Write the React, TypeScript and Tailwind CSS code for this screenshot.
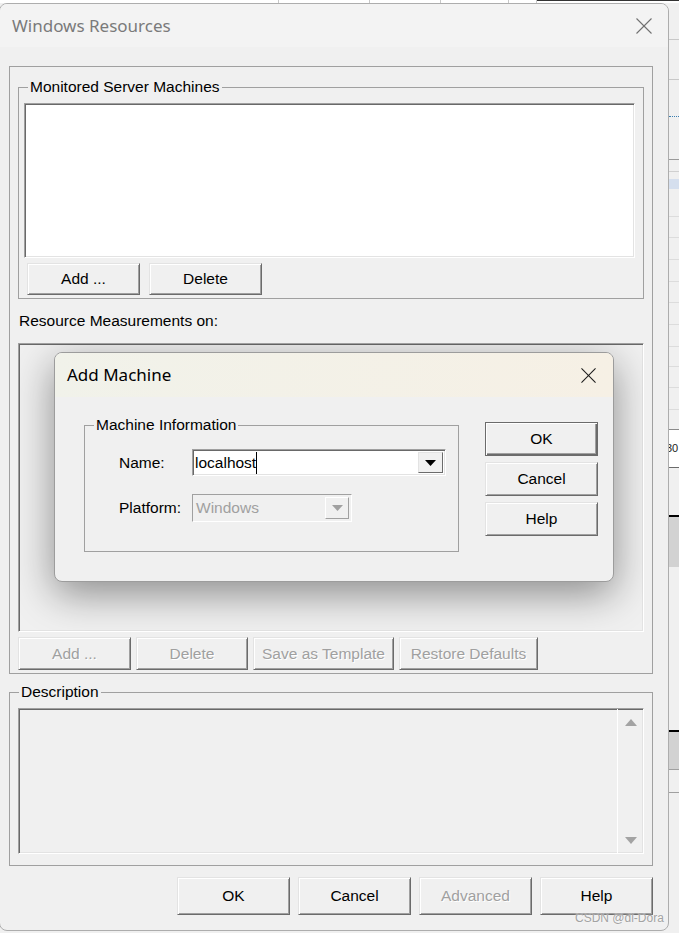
import React from 'react';

type BtnProps = {
  label: string;
  w: string;
  h: string;
  disabled?: boolean;
  isDefault?: boolean;
};

const Btn: React.FC<BtnProps> = ({ label, w, h, disabled, isDefault }) => {
  const frame = isDefault
    ? 'border border-[#6b6b6b] shadow-[inset_1px_1px_0_#ffffff,inset_-1px_-1px_0_#6b6b6b,inset_-2px_-2px_0_#a0a0a0]'
    : 'border border-t-[#e3e3e3] border-l-[#e3e3e3] border-r-[#6b6b6b] border-b-[#6b6b6b] shadow-[inset_1px_1px_0_#ffffff,inset_-1px_-1px_0_#a0a0a0]';
  const txt = disabled ? 'text-[#a0a0a0] [text-shadow:1px_1px_0_#ffffff]' : 'text-black';
  return (
    <div className={`${w} ${h} shrink-0 flex items-center justify-center bg-[#f0f0f0] text-[15.5px] leading-none ${frame} ${txt}`}>
      {label}
    </div>
  );
};

const sunken =
  'border border-t-[#a0a0a0] border-l-[#a0a0a0] border-r-white border-b-white shadow-[inset_1px_1px_0_#696969,inset_-1px_-1px_0_#e3e3e3]';

const Caret: React.FC<{ color: string }> = ({ color }) => (
  <svg width="11" height="6" viewBox="0 0 11 6">
    <polygon points="0,0 11,0 5.5,6" fill={color} />
  </svg>
);

const CloseX: React.FC<{ size: number; color: string }> = ({ size, color }) => (
  <svg width={size} height={size} viewBox="0 0 16 16" fill="none" stroke={color} strokeWidth="1.1">
    <line x1="0.5" y1="0.5" x2="15.5" y2="15.5" />
    <line x1="15.5" y1="0.5" x2="0.5" y2="15.5" />
  </svg>
);

const AddMachine: React.FC = () => (
  <div className="absolute left-[35px] top-[8px] w-[560px] h-[230px] rounded-[8px] border border-[#9c9c9c] bg-[#f0f0f0] shadow-[0_12px_40px_rgba(0,0,0,0.42)] overflow-hidden flex flex-col">
    <div className="h-[44px] shrink-0 flex items-center justify-between pl-[12px] pr-[17px] bg-gradient-to-r from-[#f1f2ea] to-[#f6f0e5]">
      <span className="font-['Noto_Sans',sans-serif] text-[17px] text-black">Add Machine</span>
      <CloseX size={15} color="#1a1a1a" />
    </div>
    <div className="flex pl-[29px]">
      <fieldset className="mt-[19px] w-[375px] h-[136px] border border-[#a0a0a0]">
        <legend className="ml-[9px] px-[2px] text-[15.5px] leading-[18px]">Machine Information</legend>
        <div className="pl-[34px] mt-[15px] flex items-center h-[27px]">
          <span className="w-[73px] text-[15.5px]">Name:</span>
          <div className={`w-[254px] h-[27px] bg-white flex items-center pl-[2px] pr-[2px] ${sunken}`}>
            <span className="flex-1 text-[15.5px] leading-none flex items-center">
              localhost<span className="inline-block w-px h-[22px] bg-black"></span>
            </span>
            <div className="w-[25px] h-[21px] flex items-center justify-center bg-[#f0f0f0] border border-t-[#e3e3e3] border-l-[#e3e3e3] border-r-[#6b6b6b] border-b-[#6b6b6b]">
              <Caret color="#000000" />
            </div>
          </div>
        </div>
        <div className="pl-[34px] mt-[18px] flex items-center h-[28px]">
          <span className="w-[73px] text-[15.5px]">Platform:</span>
          <div className="w-[160px] h-[28px] bg-[#f0f0f0] flex items-center pl-[3px] pr-[2px] border border-t-[#a0a0a0] border-l-[#a0a0a0] border-r-white border-b-white">
            <span className="flex-1 text-[15.5px] leading-none text-[#a0a0a0]">Windows</span>
            <div className="w-[24px] h-[22px] flex items-center justify-center bg-[#f0f0f0] border border-t-white border-l-white border-r-[#a0a0a0] border-b-[#a0a0a0]">
              <Caret color="#a0a0a0" />
            </div>
          </div>
        </div>
      </fieldset>
      <div className="ml-[26px] mt-[25px] flex flex-col gap-[6px]">
        <Btn label="OK" w="w-[113px]" h="h-[34px]" isDefault />
        <Btn label="Cancel" w="w-[113px]" h="h-[34px]" />
        <Btn label="Help" w="w-[113px]" h="h-[34px]" />
      </div>
    </div>
  </div>
);

// rows of the application window that shows at the right edge
const stripRows: { h: string; cls: string; text?: string }[] = [
  { h: 'h-[37px]', cls: 'border-b border-[#c8c8c8]' },
  { h: 'h-[40px]', cls: 'border-b border-[#c8c8c8]' },
  { h: 'h-[37px]', cls: 'border-b border-dotted border-[#3c7fb1]' },
  { h: 'h-[43px]', cls: 'border-b border-[#9a9a9a]' },
  { h: 'h-[12px]', cls: 'border-b border-[#d0d0d0]' },
  { h: 'h-[7px]', cls: '' },
  { h: 'h-[10px]', cls: 'bg-[#d5dfee]' },
  { h: 'h-[28px]', cls: 'border-b border-[#dcdcdc]' },
  { h: 'h-[21px]', cls: 'border-b border-[#dcdcdc]' },
  { h: 'h-[22px]', cls: 'border-b border-[#dcdcdc]' },
  { h: 'h-[22px]', cls: 'border-b border-[#dcdcdc]' },
  { h: 'h-[21px]', cls: 'border-b border-[#dcdcdc]' },
  { h: 'h-[22px]', cls: 'border-b border-[#dcdcdc]' },
  { h: 'h-[22px]', cls: 'border-b border-[#dcdcdc]' },
  { h: 'h-[20px]', cls: 'border-b border-[#dcdcdc]' },
  { h: 'h-[21px]', cls: 'border-b border-[#dcdcdc]' },
  { h: 'h-[22px]', cls: 'border-b border-[#dcdcdc]' },
  { h: 'h-[20px]', cls: 'border-b border-[#8a8a8a]' },
  { h: 'h-[38px]', cls: 'border-b border-[#6b6b6b] bg-white', text: '30' },
  { h: 'h-[49px]', cls: 'border-b-2 border-black' },
  { h: 'h-[50px]', cls: 'bg-[#d2d2d2]' },
  { h: 'h-[165px]', cls: 'border-b-2 border-black' },
  { h: 'h-[38px]', cls: 'bg-[#d2d2d2] border-b border-[#a0a0a0]' },
  { h: 'h-[23px]', cls: 'border-b border-[#a0a0a0]' },
];

const App: React.FC = () => {
  return (
    <div className="relative w-[679px] h-[933px] overflow-hidden bg-[#f0f0f0] flex flex-col font-['Liberation_Sans',Arial,sans-serif] text-black">
      {/* background application behind the dialog */}
      <div className="h-[3px] shrink-0 flex bg-white">
        <div className="w-[279px] border-r border-[#c8c8c8]"></div>
        <div className="w-[91px] border-r border-[#c8c8c8]"></div>
        <div className="w-[71px] border-r border-[#c8c8c8]"></div>
        <div className="w-[68px] border-r border-[#c8c8c8]"></div>
        <div className="w-[28px] border-r border-[#c8c8c8]"></div>
        <div className="flex-1 border-t border-[#333333]"></div>
      </div>
      <div className="flex flex-1">
        <div className="-ml-px w-[670px] h-[928px] shrink-0 rounded-[8px] border border-[#adadad] bg-[#f0f0f0] overflow-hidden flex flex-col">
          <div className="h-[43px] shrink-0 flex items-center justify-between pl-[12px] pr-[16px] bg-[#f3f3f3]">
            <span className="font-['Noto_Sans',sans-serif] text-[17px] text-[#7a7a7a]">Windows Resources</span>
            <CloseX size={16} color="#707070" />
          </div>
          <div className="flex flex-col pl-[9px] pr-[15px] pt-[19px]">
            <div className="h-[608px] border border-[#a0a0a0] px-[8px] pt-[11px] flex flex-col">
              <fieldset className="border border-[#a0a0a0] pb-[3px]">
                <legend className="ml-[9px] px-[2px] text-[15.5px] leading-[18px]">Monitored Server Machines</legend>
                <div className="pl-[5px] pr-[8px]">
                  <div className={`mt-[7px] h-[155px] bg-white ${sunken}`}></div>
                  <div className="mt-[5px] ml-[3px] flex gap-[9px]">
                    <Btn label="Add ..." w="w-[113px]" h="h-[32px]" />
                    <Btn label="Delete" w="w-[113px]" h="h-[32px]" />
                  </div>
                </div>
              </fieldset>
              <div className="mt-[13px] ml-[1px] text-[15.5px] leading-[18px]">Resource Measurements on:</div>
              <div className={`relative mt-[13px] h-[289px] bg-[#f0f0f0] overflow-hidden ${sunken}`}>
                <AddMachine />
              </div>
              <div className="mt-[5px] flex gap-[5px]">
                <Btn label="Add ..." w="w-[113px]" h="h-[33px]" disabled />
                <Btn label="Delete" w="w-[112px]" h="h-[33px]" disabled />
                <Btn label="Save as Template" w="w-[141px]" h="h-[33px]" disabled />
                <Btn label="Restore Defaults" w="w-[139px]" h="h-[33px]" disabled />
              </div>
            </div>
            <fieldset className="mt-[9px] border border-[#a0a0a0] px-[8px] pb-[11px]">
              <legend className="ml-[1px] px-[2px] text-[15.5px] leading-[18px]">Description</legend>
              <div className={`mt-[7px] h-[146px] bg-[#f0f0f0] flex justify-end ${sunken}`}>
                <div className="w-[26px] border-l border-white flex flex-col items-center justify-between pt-[10px] pb-[9px]">
                  <svg width="12" height="7" viewBox="0 0 12 7">
                    <polygon points="6,0 12,7 0,7" fill="#a3a3a3" />
                  </svg>
                  <svg width="12" height="7" viewBox="0 0 12 7">
                    <polygon points="0,0 12,0 6,7" fill="#a3a3a3" />
                  </svg>
                </div>
              </div>
            </fieldset>
            <div className="mt-[11px] flex justify-end gap-[8px]">
              <Btn label="OK" w="w-[113px]" h="h-[38px]" />
              <Btn label="Cancel" w="w-[113px]" h="h-[38px]" />
              <Btn label="Advanced" w="w-[113px]" h="h-[38px]" disabled />
              <Btn label="Help" w="w-[113px]" h="h-[38px]" />
            </div>
          </div>
        </div>
        <div className="flex-1 flex flex-col overflow-hidden">
          {stripRows.map((r, i) => (
            <div key={i} className={`${r.h} shrink-0 ${r.cls} flex items-center overflow-hidden`}>
              {r.text && <span className="-ml-[3px] text-[11px] leading-none text-[#1a1a1a]">{r.text}</span>}
            </div>
          ))}
        </div>
      </div>
      <div className="absolute left-[575px] top-[911px] text-[12px] leading-[15px] text-[#a3a3a3] [text-shadow:0_0_2px_#ffffff]">
        CSDN @dl-Dora
      </div>
    </div>
  );
};

export default App;
